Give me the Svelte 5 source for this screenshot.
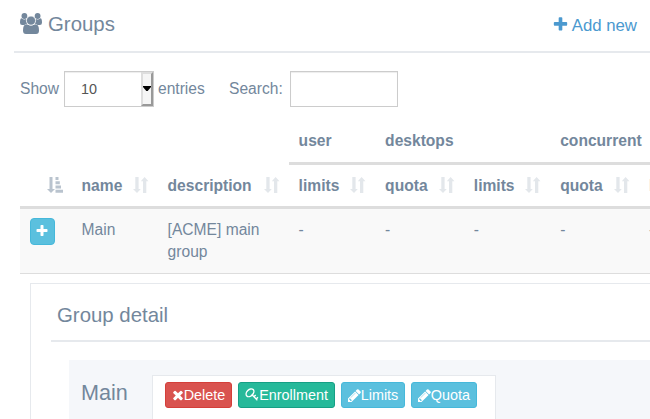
<script>
  const plus = 'M1600 736v192q0 40-28 68t-68 28h-416v416q0 40-28 68t-68 28h-192q-40 0-68-28t-28-68v-416h-416q-40 0-68-28t-28-68v-192q0-40 28-68t68-28h416v-416q0-40 28-68t68-28h192q40 0 68 28t28 68v416h416q40 0 68 28t28 68z';
  const times = 'M1490 1322q0 40-28 68l-136 136q-28 28-68 28t-68-28l-294-294-294 294q-28 28-68 28t-68-28l-136-136q-28-28-28-68t28-68l294-294-294-294q-28-28-28-68t28-68l136-136q28-28 68-28t68 28l294 294 294-294q28-28 68-28t68 28l136 136q28 28 28 68t-28 68l-294 294 294 294q28 28 28 68z';
  const pencil = 'M491 1536l91-91-235-235-91 91v107h128v128h107zm523-928q0-22-22-22-10 0-17 7l-542 542q-7 7-7 17 0 22 22 22 10 0 17-7l542-542q7-7 7-17zm-54-192l416 416-832 832h-416v-416zm683 96q0 53-37 90l-166 166-416-416 166-165q36-38 90-38 53 0 91 38l235 234q37 39 37 91z';
  const columns = ['name', 'description', 'limits', 'quota', 'limits', 'quota', 'limits'];
</script>

<div class="page">
  <header>
    <h2>
      <svg class="users" width="22" height="21" viewBox="0 0 22 21">
        <circle cx="4.4" cy="3" r="2.9" /><circle cx="17.6" cy="3" r="2.9" />
        <path d="M1.5 5.2Q4.3 7.6 6.4 5.8Q5.9 8.5 7.8 10.6Q5.6 10.7 4.4 12H2.2Q0 12 0 9.7Q0 5.3 1.5 5.2zM20.5 5.2Q17.7 7.6 15.6 5.8Q16.1 8.5 14.2 10.6Q16.4 10.7 17.6 12H19.8Q22 12 22 9.7Q22 5.3 20.5 5.2z" />
        <path d="M6.5 11.3Q11 13.6 15.5 11.3Q19 11.3 19 17.4Q19 20.9 16 20.9H6Q3 20.9 3 17.4Q3 11.3 6.5 11.3z" />
        <circle class="head" cx="11" cy="7.6" r="4.6" />
      </svg>
      <span>Groups</span>
    </h2>
    <a class="add" href="#add"><svg width="17" height="17" viewBox="0 0 1792 1792"><path d={plus} /></svg><span>Add new</span></a>
  </header>

  <div class="controls">
    <span class="show">Show</span>
    <div class="select"><span>10</span><i><svg width="8" height="5" viewBox="0 0 8 5"><path d="M0 0H8V1L4.7 5H3.3L0 1z" /></svg></i></div>
    <span class="entries">entries</span>
    <label for="search">Search:</label>
    <input id="search" />
  </div>

  <table>
    <colgroup>
      <col style:width="52px" /><col style:width="86px" /><col style:width="131px" /><col style:width="86.5px" />
      <col style:width="88.7px" /><col style:width="86.4px" /><col style:width="88.7px" /><col style:width="90px" />
    </colgroup>
    <thead>
      <tr class="top"><th class="blank" colspan="3"></th><th>user</th><th colspan="2">desktops</th><th colspan="2">concurrent</th></tr>
      <tr class="sub">
        <th>
          <svg class="sort active" width="16" height="16" viewBox="0 0 16 16"><path d="M2.5 0H5.5V12H8L4 16L0 12H2.5zM8.5 0H11.5V3H8.5zM8.5 4.3H12.8V7.3H8.5zM8.5 8.6H14V11.6H8.5zM8.5 12.7H16V15.7H8.5z" /></svg>
        </th>
        {#each columns as column}
          <th><div class="label"><span>{column}</span>
            <svg class="sort" width="16" height="16" viewBox="0 0 16 16"><path d="M2.3 0H5.6V12H7.8L4 16L0 12H2.3zM11.6 0L15.5 4.2H13.3V16H10V4.2H7.8z" /></svg>
          </div></th>
        {/each}
      </tr>
    </thead>
    <tbody>
      <tr>
        <td class="toggle"><button class="expand" aria-label="Expand group"><svg width="14" height="14" viewBox="0 0 1792 1792"><path d={plus} /></svg></button></td>
        <td>Main</td><td>[ACME] main group</td><td>-</td><td>-</td><td>-</td><td>-</td><td>-</td>
      </tr>
    </tbody>
  </table>

  <section class="detail">
    <h2>Group detail</h2>
    <div class="panel">
      <h3>Main</h3>
      <div class="actions">
        <button class="btn red"><svg width="12" height="12" viewBox="160 160 1472 1472"><path d={times} /></svg><span>Delete</span></button>
        <button class="btn green">
          <svg class="key" width="14" height="14" viewBox="0 0 14 14"><ellipse cx="5" cy="4.8" rx="4.5" ry="3.1" transform="rotate(-45 5 4.8)" /><path d="M6.7 6.5L12.4 12.2M9 8.8L10.7 7.1M11.2 11L12.9 9.3" /></svg><span>Enrollment</span>
        </button>
        <button class="btn blue"><svg width="13" height="13" viewBox="128 128 1536 1536"><path d={pencil} /></svg><span>Limits</span></button>
        <button class="btn blue"><svg width="13" height="13" viewBox="128 128 1536 1536"><path d={pencil} /></svg><span>Quota</span></button>
      </div>
    </div>
  </section>
</div>

<style>
  :global(body) { margin: 0; overflow: hidden; }
  .page {
    width: 650px; height: 419px; overflow: hidden; box-sizing: border-box;
    background: #fff; color: #73879c; fill: currentColor;
    font: 15.6px/22.3px "Liberation Sans", Arial, sans-serif;
  }
  svg { display: block; flex: none; }
  h2, h3 { margin: 0; font-weight: 400; }
  header {
    display: flex; justify-content: space-between; box-sizing: border-box;
    height: 53px; margin-left: 14px; padding: 0 13px 0 6px; border-bottom: 2px solid #e6e9ed;
  }
  header h2 { display: flex; gap: 6px; padding-top: 13px; font-size: 20.4px; line-height: 23px; }
  .head { stroke: #fff; stroke-width: .8; }
  .add { display: flex; padding-top: 14px; gap: 2.5px; color: #4b99cf; text-decoration: none; font-size: 16.8px; line-height: 23px; }
  .add svg { margin-top: 2px; }
  .controls { display: flex; align-items: center; height: 36px; margin: 18px 0 0 20px; }
  .show { width: 44px; }
  .select {
    display: flex; justify-content: space-between; box-sizing: border-box; width: 90px; height: 36px;
    border: 1px solid #ccc; color: #555; font-size: 14.4px; line-height: 35px;
    box-shadow: inset 0 1px 1px rgba(0,0,0,.075);
  }
  .select span { padding-left: 16px; }
  .select i {
    display: flex; align-items: center; justify-content: center; box-sizing: border-box;
    width: 12px; padding: 0 1px 2px 0; border: 2px solid; border-color: #ddd #999 #999 #ddd; background: #f5f5f5; fill: #000;
  }
  .entries { width: 71px; padding-left: 4px; }
  label { width: 61px; }
  input { box-sizing: border-box; width: 108px; height: 36px; border: 1px solid #ccc; box-shadow: inset 0 1px 1px rgba(0,0,0,.075); }
  table { width: 709.3px; table-layout: fixed; margin: 12px 0 0 20px; border-spacing: 0; }
  th, td { box-sizing: border-box; padding: 10px 9.6px; text-align: left; vertical-align: top; }
  .top th { height: 46px; padding-top: 11px; padding-bottom: 9px; border-bottom: 3px solid #ddd; }
  .top .blank { border: 0; }
  .sub th { height: 44px; padding: 10px 0 0 9.6px; border-bottom: 3px solid #ddd; }
  .label { display: flex; justify-content: space-between; padding-right: 9.5px; }
  .sort { margin-top: 2px; fill: #e3e7eb; }
  .active { margin: 2px 0 0 17px; fill: #b9c3ce; }
  td { height: 65px; padding-bottom: 9px; border-bottom: 1px solid #ddd; background: #f9f9f9; }
  .toggle { padding-top: 9px; }
  .expand {
    display: flex; align-items: center; justify-content: center; width: 25px; height: 27px; padding: 0 0 2px;
    border: 1px solid #46b8da; border-radius: 4px; background: #5bc0de; fill: #fff; margin-left: .4px;
  }
  .detail { width: 700px; height: 180px; margin: 9px 0 0 30px; padding: 0 0 0 20px; border: 1px solid #e6e9ed; box-sizing: border-box; }
  .detail h2 { height: 56px; padding-left: 6px; border-bottom: 2px solid #e6e9ed; font-size: 20.4px; line-height: 63px; }
  .panel { display: flex; height: 100px; margin: 18px 0 0 18px; padding: 15px 0 0 12px; box-sizing: border-box; background: #f5f7fa; }
  h3 { width: 71px; font-size: 21.6px; line-height: 35px; }
  .actions { display: flex; gap: 6px; box-sizing: border-box; width: 344px; height: 80px; padding: 6px 12px; border: 1px solid #e6e9ed; background: #fff; }
  .btn {
    display: flex; align-items: center; box-sizing: border-box; height: 26px; padding: 0 6px;
    border: 1px solid; border-radius: 3px; color: #fff; fill: #fff; white-space: nowrap;
    font: 14.4px/22px "Liberation Sans", Arial, sans-serif;
  }
  .btn svg { margin-right: -.3px; }
  .red { width: 67px; background: #d9534f; border-color: #d43f3a; }
  .green { width: 97px; background: #26b99a; border-color: #169f85; }
  .blue { width: 64px; background: #5bc0de; border-color: #46b8da; }
  .blue:last-child { width: 66px; }
  .btn .key { margin-right: .2px; fill: none; stroke: #fff; stroke-width: 1.4; }
</style>
